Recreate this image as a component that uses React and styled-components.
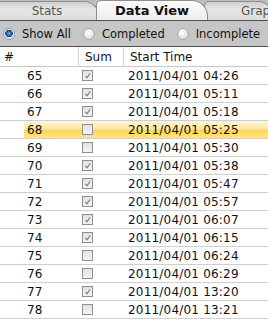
import React, { useState } from 'react';
import styled, { createGlobalStyle } from 'styled-components';

const GlobalStyle = createGlobalStyle`
  html, body { margin: 0; padding: 0; background: #fff; overflow: hidden; }
  body { font-family: "DejaVu Sans", Verdana, sans-serif; }
`

const Panel = styled.div`
  width: 268px;
  height: 319px;
  overflow: hidden;
  background: #fff;
  display: flex;
  flex-direction: column;
`

const TabBar = styled.div`
  height: 20px;
  display: flex;
  align-items: flex-end;
  background: linear-gradient(#bdbdbd, #d6d6d6);
  border-bottom: 1px solid #4e4e4e;
  flex: none;
`

const Tab = styled.div`
  position: relative;
  height: ${p => (p.$active ? 20 : 19)}px;
  box-sizing: border-box;
  width: ${p => p.$width}px;
  margin-left: ${p => p.$offset || 0}px;
  flex: none;
  display: flex;
  align-items: center;
  justify-content: ${p => (p.$align || 'center')};
  padding-left: ${p => p.$pad || 0}px;
  border: 1px solid #8e8e8e;
  border-bottom: none;
  border-radius: 5px 16px 0 0;
  background: ${p => (p.$active
    ? 'linear-gradient(#fafafa, #eeeeee)'
    : 'linear-gradient(#cfcfcf, #e6e6e6 40%, #dedede)')};
  z-index: ${p => (p.$active ? 2 : 1)};
  font-size: ${p => (p.$active ? 13 : 12)}px;
  font-weight: ${p => (p.$active ? 'bold' : 'normal')};
  color: ${p => (p.$active ? '#111' : '#555')};
  white-space: nowrap;
  overflow: hidden;
`

const FilterBar = styled.div`
  height: 25px;
  flex: none;
  display: flex;
  align-items: center;
  padding-left: 3px;
  background: #c6c6c6;
  border-bottom: 1px solid #4e4e4e;
`

const RadioOption = styled.label`
  display: flex;
  align-items: center;
  gap: 7px;
  margin-right: 12px;
  font-size: 11.5px;
  color: #111;
  cursor: pointer;
  white-space: nowrap;
`

const RadioDot = styled.span`
  width: 12px;
  height: 12px;
  box-sizing: border-box;
  border-radius: 50%;
  border: 1px solid ${p => (p.$on ? '#8aa0b8' : '#a8a8a8')};
  background: ${p => (p.$on
    ? 'radial-gradient(circle at 50% 45%, #7fb4e6 0, #2c6fb5 2px, #123f72 3.5px, #e8eef4 4px, #cfd6de 6px)'
    : 'radial-gradient(circle at 40% 35%, #ffffff, #dedede 70%, #cfcfcf)')};
  flex: none;
`

const HeaderRow = styled.div`
  height: 19px;
  flex: none;
  display: grid;
  grid-template-columns: 78px 45px 1fr;
  border-bottom: 1px solid #c8c8c8;
  font-size: 12px;
  color: #111;
`

const HeaderCell = styled.div`
  display: flex;
  align-items: center;
  padding-left: ${p => p.$pad}px;
  border-left: ${p => (p.$first ? 'none' : '1px solid #d4d4d4')};
`

const Row = styled.div`
  height: 18px;
  box-sizing: border-box;
  flex: none;
  padding-left: 24px;
  border-bottom: 1px solid #cfcfcf;
  display: flex;
`

const RowBody = styled.div`
  flex: 1;
  display: grid;
  grid-template-columns: 54px 45px 1fr;
  align-items: center;
  font-size: 12px;
  color: #111;
  background: ${p => (p.$selected
    ? 'linear-gradient(#fff6d2, #ffe89a 45%, #ffd655 55%, #ffe48a)'
    : 'transparent')};
`

const NumCell = styled.div`
  padding-left: 3px;
  padding-top: 1px;
`

const TimeCell = styled.div`
  padding-left: 5px;
  padding-top: 1px;
  letter-spacing: 0.2px;
  white-space: nowrap;
`

const BoxCell = styled.div`
  display: flex;
  align-items: center;
  padding-left: 4px;
`

const Box = styled.span`
  width: 11px;
  height: 11px;
  box-sizing: border-box;
  border: 1px solid #8f8f8f;
  background: linear-gradient(#e2e2e2, #f4f4f4);
  display: flex;
  align-items: center;
  justify-content: center;
`

const rows = [
  [65, true, '04:26'], [66, true, '05:11'], [67, true, '05:18'],
  [68, false, '05:25'], [69, false, '05:30'], [70, true, '05:38'],
  [71, true, '05:47'], [72, true, '05:57'], [73, true, '06:07'],
  [74, true, '06:15'], [75, false, '06:24'], [76, false, '06:29'],
  [77, true, '13:20'], [78, false, '13:21'],
]

function Check({ on }) {
  return (
    <Box>
      {on && (
        <svg width="9" height="9" viewBox="0 0 9 9">
          <path d="M2.5 5 L4 6.8 L7 2.5" fill="none" stroke="#6c7e94" strokeWidth="1.2" />
        </svg>
      )}
    </Box>
  )
}

function App() {
  const [filter, setFilter] = useState('all')

  return (
    <Panel>
      <GlobalStyle />
      <TabBar>
        <Tab $width={106} $offset={-6}>Stats</Tab>
        <Tab $width={112} $offset={-4} $active>Data View</Tab>
        <Tab $width={70} $offset={-4} $align="flex-start" $pad={36}>Graph</Tab>
      </TabBar>
      <FilterBar>
        {[['all', 'Show All'], ['done', 'Completed'], ['todo', 'Incomplete']].map(([key, label]) => (
          <RadioOption key={key} onClick={() => setFilter(key)}>
            <RadioDot $on={filter === key} />
            {label}
          </RadioOption>
        ))}
      </FilterBar>
      <HeaderRow>
        <HeaderCell $first $pad={4}>#</HeaderCell>
        <HeaderCell $pad={6}>Sum</HeaderCell>
        <HeaderCell $pad={6}>Start Time</HeaderCell>
      </HeaderRow>
      {rows.map(([n, sum, time]) => (
        <Row key={n}>
          <RowBody $selected={n === 68}>
            <NumCell>{n}</NumCell>
            <BoxCell><Check on={sum} /></BoxCell>
            <TimeCell>2011/04/01 {time}</TimeCell>
          </RowBody>
        </Row>
      ))}
    </Panel>
  )
}

export default App
